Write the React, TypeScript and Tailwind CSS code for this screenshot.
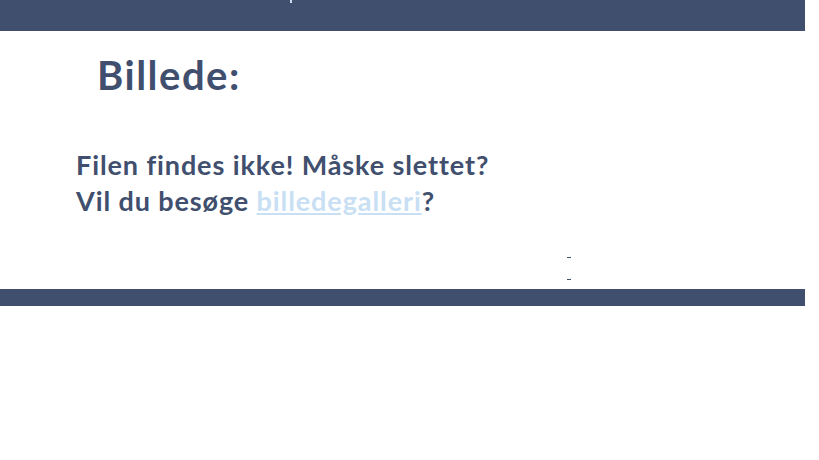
export default function App() {
  return (
    <div className="w-[805px] bg-white font-['Lato','DejaVu_Sans',sans-serif] text-[#414f6e]">
      <div className="h-[31px] bg-[#414f6e] pl-[290px]">
        <div className="h-[3px] w-[2px] bg-[#c8dcf0]" />
      </div>
      <div className="pl-[97px] pt-[20px]">
        <h1 className="text-[40px] font-bold leading-[48px] tracking-[1.5px]">Billede:</h1>
      </div>
      <div className="pl-[76px] pt-[48px] text-[27px] font-bold leading-[36px] tracking-[0.9px]">
        <p>Filen findes ikke! Måske slettet?</p>
        <p>
          Vil du besøge{" "}
          <a href="#" className="text-[#c8dff4] underline">
            billedegalleri
          </a>
          ?
        </p>
      </div>
      <div className="flex flex-col items-start pl-[567px] pt-[38px] pb-[9px] gap-[21px]">
        <div className="h-px w-[4px] bg-[#414f6e]" />
        <div className="h-px w-[4px] bg-[#414f6e]" />
      </div>
      <div className="h-[17px] bg-[#414f6e]" />
    </div>
  );
}
